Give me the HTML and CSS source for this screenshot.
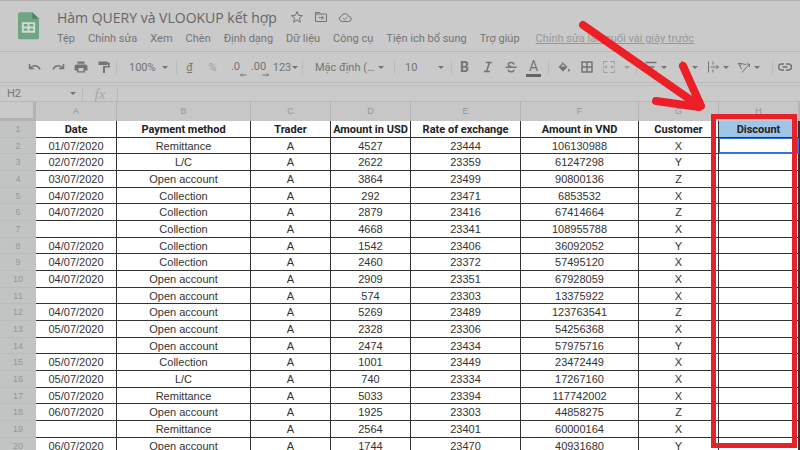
FILE: index.html
```
<!DOCTYPE html>
<html lang="vi">
<head>
  <meta charset="UTF-8" />
  <meta name="viewport" content="width=device-width, initial-scale=1.0"/>
  <title>Hàm QUERY và VLOOKUP kết hợp</title>
  <link rel="stylesheet" href="styles.css">
</head>
<body>

  <header class="cabecera">
    <svg class="logo" viewBox="0 0 22 30" aria-hidden="true">
      <path d="M2 0.500h13l7 7V27a2 2 0 0 1-2 2H2a2 2 0 0 1-2-2V2.500a2 2 0 0 1 2-2z" fill="#6fa583"/>
      <path d="M15 0.500l7 7h-7z" fill="#557f65"/>
      <path d="M4 11h14v11H4zM6 13v2.500h4V13zM12 13v2.500h4V13zM6 17.500V20h4v-2.500zM12 17.500V20h4v-2.500z" fill="#d2dcd5" fill-rule="evenodd"/>
    </svg>
    <div class="doc">
      <div class="doc-titulo">
        <h1>Hàm QUERY và VLOOKUP kết hợp</h1>
        <button class="icono" aria-label="Gắn dấu sao"><svg viewBox="0 0 14 14"><path d="M7 1.500l1.500 3.800 4 .3-3.100 2.600 1 4L7 10l-3.400 2.200 1-4L1.500 5.600l4-.3z"/></svg></button>
        <button class="icono" aria-label="Di chuyển"><svg viewBox="0 0 14 14"><path d="M1.500 2.500h4l1 1.500h6v7.500h-11zM1.500 4h5M4.500 7.700h5M7.700 5.900l1.800 1.800-1.800 1.800"/></svg></button>
        <button class="icono" aria-label="Trạng thái"><svg viewBox="0 0 14 14"><path d="M3.800 11.500a2.800 2.800 0 0 1-.3-5.500A3.800 3.800 0 0 1 10.700 6.500a2.500 2.500 0 0 1 0 5zM5 8.200l1.600 1.500L9.300 7"/></svg></button>
      </div>
      <nav class="menu">
        <button>Tệp</button>
        <button>Chỉnh sửa</button>
        <button>Xem</button>
        <button>Chèn</button>
        <button>Định dạng</button>
        <button>Dữ liệu</button>
        <button>Công cụ</button>
        <button>Tiện ích bổ sung</button>
        <button>Trợ giúp</button>
        <a href="#">Chỉnh sửa lần cuối vài giây trước</a>
      </nav>
    </div>
  </header>

  <div class="barra">
    <button aria-label="Hoàn tác"><svg viewBox="0 0 14 14"><path d="M1.500 4v4.500H6M2 8c3-3.500 8-3 10 1.500" class="grueso"/></svg></button>
    <button aria-label="Làm lại"><svg viewBox="0 0 14 14"><path d="M12.500 4v4.500H8M12 8C9 4.500 4 5 2 9.500" class="grueso"/></svg></button>
    <button aria-label="In"><svg viewBox="0 0 14 14"><path d="M3.500 1.500h7v2.200h-7zM2.500 4.500h9a2 2 0 0 1 2 2v4h-2.500v2H3v-2H.500v-4a2 2 0 0 1 2-2zM4.500 8v3.200h5V8z" class="lleno"/></svg></button>
    <button aria-label="Sao chép định dạng"><svg viewBox="0 0 14 14"><path d="M1.500 1.500h9v1h2.200v5H8V13H6V6h5V4h-.5v1h-9z" class="lleno"/></svg></button>
    <span class="sep"></span>
    <label class="combo zoom"><select aria-label="Thu phóng"><option>100%</option></select></label>
    <span class="sep"></span>
    <button>₫</button>
    <button class="suave">%</button>
    <button class="decimal">.0<svg viewBox="0 0 8 4"><path d="M7.500 2H1.500M3 .5L1.500 2 3 3.500"/></svg></button>
    <button class="decimal">.00<svg viewBox="0 0 8 4"><path d="M.5 2h6M5 .5L6.500 2 5 3.500"/></svg></button>
    <button class="flecha numeros">123</button>
    <span class="sep"></span>
    <label class="combo fuente"><select aria-label="Phông chữ"><option>Mặc định (…</option></select></label>
    <span class="sep"></span>
    <label class="combo talla"><select aria-label="Cỡ chữ"><option>10</option></select></label>
    <span class="sep"></span>
    <button class="letra">B</button>
    <button aria-label="In nghiêng"><svg viewBox="0 0 14 14"><path d="M5 2.500h6M3 11.500h6M8.500 2.500l-3 9" class="grueso"/></svg></button>
    <button aria-label="Gạch ngang"><svg viewBox="0 0 14 14"><path d="M10 4.500C9.700 1.700 4.300 1.700 4.300 4.500c0 1.300 1.200 1.800 2.700 2.300M4 9.500c.3 3 6 3 6 .3M1.500 7.200h11" class="grueso"/></svg></button>
    <button class="color">A</button>
    <span class="sep ancho"></span>
    <button aria-label="Màu nền"><svg viewBox="0 0 14 14"><path d="M4.500 1l6 6-4.500 4.500L1.500 7l4-4M12 8.500c1.600 2.200 1 3-.1 3s-1.500-1-.1-3z" class="lleno"/><path d="M3.800 6.500h4.700L6 4.200z" fill="#cacaca" stroke="none"/></svg></button>
    <button aria-label="Đường viền"><svg viewBox="0 0 14 14"><path d="M2 2h10v10H2zM7 2v10M2 7h10" class="grueso"/></svg></button>
    <button class="flecha unir suave" aria-label="Hợp nhất ô"><svg viewBox="0 0 14 14"><path d="M1.500 4.500v-3h4M8.500 1.500h4v3M1.500 9.500v3h4M8.500 12.500h4v-3M1 7h4M9 7h4M3.700 5.700L5 7 3.700 8.300M10.300 5.700L9 7l1.300 1.300"/></svg></button>
    <span class="sep ancho"></span>
    <button class="flecha" aria-label="Căn ngang"><svg viewBox="0 0 14 14"><path d="M1.500 2.500h11M3.500 7h7M1.500 11.500h11" class="grueso"/></svg></button>
    <button class="flecha" aria-label="Căn dọc"><svg viewBox="0 0 14 14"><path d="M7 1v8M4.500 6.500L7 9l2.500-2.500" class="grueso"/></svg></button>
    <button class="flecha" aria-label="Xuống dòng"><svg viewBox="0 0 14 14"><path d="M2.500 1.500v11M7 1.500v3M7 9.500v3M4.500 7h8M10.500 5l2 2-2 2"/></svg></button>
    <button class="flecha" aria-label="Xoay văn bản"><svg viewBox="0 0 14 14"><path d="M1 3l8 1.500M1 3l4 6.500M4.500 3.800L3 6M5 12.500L12.500 4M12.500 7V4H9.700"/></svg></button>
    <span class="sep final"></span>
    <button aria-label="Chèn đường liên kết"><svg viewBox="0 0 14 14"><path d="M6 4H3.500a3 3 0 0 0 0 6H6M8 4h2.500a3 3 0 0 1 0 6H8M4.500 7h5" class="grueso"/></svg></button>
  </div>

  <div class="formula">
    <label class="combo nombre"><input type="text" value="H2" aria-label="Hộp tên"></label>
    <span class="sep"></span>
    <label class="fx" for="formula">fx</label>
    <span class="sep"></span>
    <input type="text" id="formula">
  </div>

  <main class="hoja">
    <table>
      <colgroup>
        <col class="c-num"><col class="c-a"><col class="c-b"><col class="c-80"><col class="c-80">
        <col class="c-e"><col class="c-f"><col class="c-80"><col class="c-80"><col>
      </colgroup>
      <thead>
        <tr><th class="esquina"></th><th>A</th><th>B</th><th>C</th><th>D</th><th>E</th><th>F</th><th>G</th><th>H</th><th></th></tr>
      </thead>
      <tbody id="filas">
        <tr class="titulos"><th>1</th><td>Date</td><td>Payment method</td><td>Trader</td><td>Amount in USD</td><td>Rate of exchange</td><td>Amount in VND</td><td>Customer</td><td class="descuento">Discount</td><td></td></tr>
      </tbody>
    </table>
    <div class="marco"></div>
  </main>

  <svg class="senal" viewBox="0 0 130 95" aria-hidden="true">
    <path d="M7 9L122 89M107 50L125 90M80 85L123 91"/>
  </svg>

  <script>
    const datos = [
      ["01/07/2020","Remittance","A","4527","23444","106130988","X"],
      ["02/07/2020","L/C","A","2622","23359","61247298","Y"],
      ["03/07/2020","Open account","A","3864","23499","90800136","Z"],
      ["04/07/2020","Collection","A","292","23471","6853532","X"],
      ["04/07/2020","Collection","A","2879","23416","67414664","Z"],
      ["","Collection","A","4668","23341","108955788","X"],
      ["04/07/2020","Collection","A","1542","23406","36092052","Y"],
      ["04/07/2020","Collection","A","2460","23372","57495120","X"],
      ["04/07/2020","Open account","A","2909","23351","67928059","X"],
      ["","Open account","A","574","23303","13375922","X"],
      ["04/07/2020","Open account","A","5269","23489","123763541","Z"],
      ["05/07/2020","Open account","A","2328","23306","54256368","X"],
      ["","Open account","A","2474","23434","57975716","Y"],
      ["05/07/2020","Collection","A","1001","23449","23472449","X"],
      ["05/07/2020","L/C","A","740","23334","17267160","X"],
      ["05/07/2020","Remittance","A","5033","23394","117742002","X"],
      ["06/07/2020","Open account","A","1925","23303","44858275","Z"],
      ["","Remittance","A","2564","23401","60000164","X"],
      ["06/07/2020","Open account","A","1744","23470","40931680","Y"]
    ];
    const filas = document.getElementById("filas");

    datos.forEach((d,i)=> {
      const tr=document.createElement("tr");
      const th=document.createElement("th"); th.innerText=i+2; tr.appendChild(th);
      // columna H y la siguiente van vacías
      d.concat("","").forEach(v=> {
        const td=document.createElement("td"); td.innerText=v; tr.appendChild(td);
      });
      if(i===0) tr.children[8].classList.add("activa");
      filas.appendChild(tr);
    });
  </script>
</body>
</html>
```

FILE: styles.css
```
/* ===== Base ===== */
* { margin:0; padding:0; box-sizing:border-box; }
html, body { height:100%; overflow:hidden; }
body {
  display:flex; flex-direction:column; position:relative;
  background:#cacaca; color:#747474;
  font-family:Roboto, sans-serif; font-size:11px;
}
button, input, select {
  font:inherit; color:inherit; background:none; border:none; outline:none;
}
svg { fill:none; stroke:currentColor; stroke-width:1; }
svg .grueso { stroke-width:1.5; }
svg .lleno { fill:currentColor; fill-rule:evenodd; stroke:none; }

/* ===== Cabecera ===== */
.cabecera {
  display:flex; gap:18px; flex:none; height:52px;
  padding:8px 17px 0 18px;
  border-top:1px solid #b4b4b4; border-bottom:1px solid #b8b8b8;
}
.logo { width:21px; height:30px; margin-top:2px; stroke:none; }
.doc-titulo { display:flex; align-items:center; height:16px; }
.doc-titulo h1 {
  font-family:"Open Sans", sans-serif; font-size:14px; font-weight:400;
  color:#666; margin-right:13px; white-space:nowrap;
}
.icono { width:14px; height:14px; margin-right:10px; }
.icono svg { display:block; width:14px; height:14px; }
.menu { display:flex; gap:13px; margin-top:6px; line-height:16px; white-space:nowrap; }
.menu a { color:#989898; margin-left:3px; }

/* ===== Barra de herramientas ===== */
.barra {
  display:flex; align-items:center; flex:none; height:31px;
  padding-left:23px; border-bottom:1px solid #bbb;
}
.barra button {
  display:flex; align-items:center; justify-content:center;
  flex:none; width:23px; height:24px;
}
.barra button svg { width:14px; height:14px; flex:none; }
.sep { flex:none; width:1px; height:14px; margin:0 1px; background:#bbb; }
.sep.ancho { margin:0 3px; }
.sep.final { margin:0 0 0 8px; }
.barra .suave { color:#9c9c9c; }

.combo { display:flex; align-items:center; flex:none; }
.combo select, .combo input { appearance:none; flex:1; min-width:0; }
.combo::after, .flecha::after {
  content:""; flex:none;
  border:3px solid transparent; border-top-color:currentColor; border-bottom:0;
}
.zoom { width:57px; padding:0 7px 0 11px; }
.fuente { width:89px; padding:0 9px 0 11px; }
.talla { width:54px; padding:0 6px 0 9px; }

.barra .flecha { width:31px; gap:3px; }
.barra .numeros { gap:1px; }
.barra .unir { width:35px; gap:8px; }
.barra .decimal { flex-direction:column; line-height:12px; padding-top:4px; }
.barra .decimal svg { width:8px; height:4px; align-self:flex-end; }
.barra .letra { font-size:14px; font-weight:700; }
.barra .color { font-size:14px; line-height:14px; padding-bottom:3px; position:relative; }
.barra .color::after {
  content:""; position:absolute; left:4px; right:4px; bottom:2px;
  height:3px; background:#666;
}

/* ===== Barra de fórmula ===== */
.formula {
  display:flex; align-items:center; flex:none; height:17px;
  margin-top:2px; border-top:1px solid #bfbfbf; border-bottom:1px solid #b8b8b8;
  line-height:14px;
}
.nombre { width:81px; padding:0 5px 0 7px; }
.fx { width:32px; text-align:center; color:#a8a8a8; font:italic 15px/12px "Liberation Serif", serif; }
.formula #formula { flex:1; min-width:0; }

/* ===== Hoja ===== */
.hoja { flex:1; min-height:0; overflow:hidden; }
table {
  width:100%; table-layout:fixed; border-collapse:separate; border-spacing:0;
  font-family:"Liberation Sans", Arial, sans-serif; line-height:15px;
}
.c-num { width:36px; }
.c-a { width:81px; }
.c-b { width:134px; }
.c-80 { width:80px; }
.c-e { width:110px; }
.c-f { width:118px; }

thead th {
  height:19px; font-size:9px; font-weight:400; color:#969696;
  background:#c7c7c7; border-right:1px solid #b4b4b4;
}
thead .esquina { background:#cacaca; border-right:3px solid #b2b2b2; border-bottom:3px solid #b2b2b2; }
tbody th {
  font-size:9px; font-weight:400; color:#969696;
  background:#c2c4c4; border-bottom:1px solid #bbbdbd;
}
tbody td {
  height:17px; text-align:center; white-space:nowrap;
  color:#333; background:#fff;
  border-right:1px solid #333; border-bottom:1px solid #333;
}
/* alterna 17/17/16 para el alto de las filas */
tbody tr:nth-child(3n+2) td { height:16px; line-height:14px; }
tbody tr:nth-child(3n+2) th { line-height:14px; }
.titulos td { font-family:Roboto, sans-serif; font-weight:700; color:#222; }
.titulos .descuento { background:#9fc5e8; }
tbody .activa { border-color:#2f74e0; box-shadow:inset 0 0 0 1px #2f74e0; }

/* ===== Marcas rojas ===== */
.marco {
  position:absolute; left:711px; top:114px; width:86px; height:334px;
  border:5px solid #e62129;
}
.senal {
  position:absolute; left:576px; top:16px; width:130px; height:95px;
  stroke:#ec1f27; stroke-width:8; stroke-linecap:round;
}
```
